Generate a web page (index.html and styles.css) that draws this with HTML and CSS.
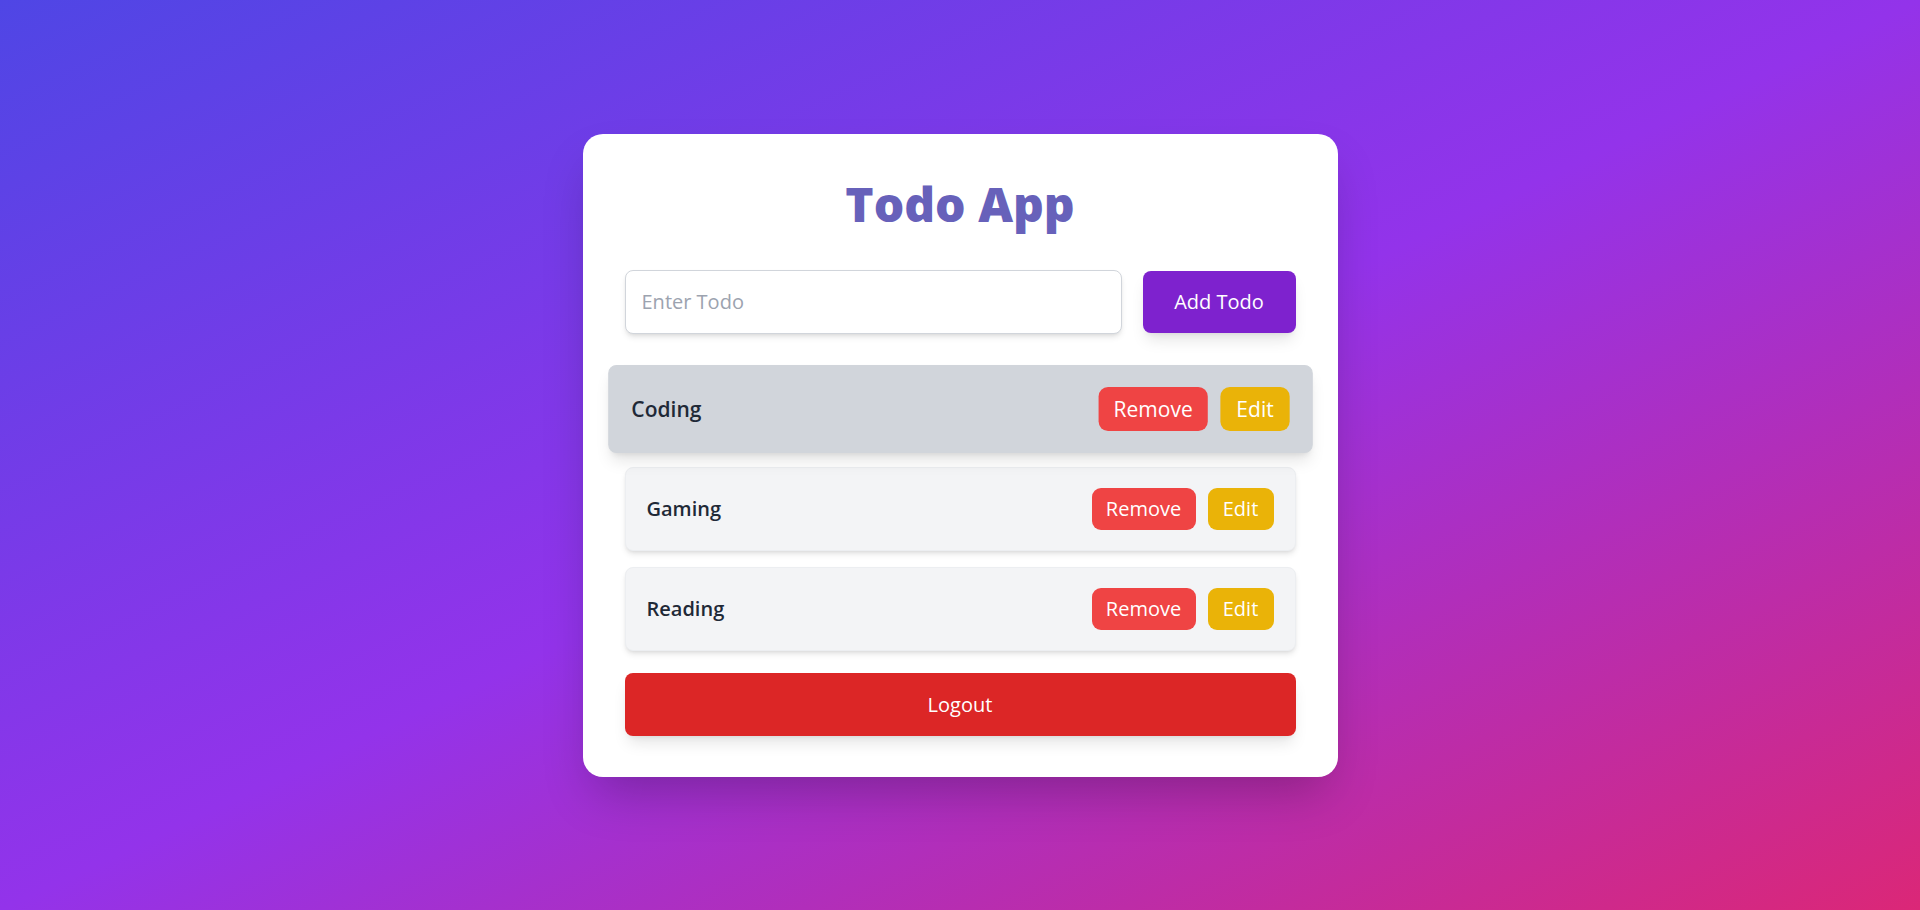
FILE: index.html
```html
<!DOCTYPE html>
<html lang="en">
<head>
<meta charset="utf-8">
<title>Todo App</title>
<link rel="stylesheet" href="styles.css">
</head>
<body>
<main class="page">
  <section class="card">
    <h1 class="title">Todo App</h1>
    <form class="add-form">
      <input class="todo-input" type="text" placeholder="Enter Todo">
      <button class="add-btn" type="button">Add Todo</button>
    </form>
    <ul class="todo-list">
      <li class="todo-item is-hover">
        <span class="todo-text">Coding</span>
        <div class="actions">
          <button class="btn btn-remove" type="button">Remove</button>
          <button class="btn btn-edit" type="button">Edit</button>
        </div>
      </li>
      <li class="todo-item">
        <span class="todo-text">Gaming</span>
        <div class="actions">
          <button class="btn btn-remove" type="button">Remove</button>
          <button class="btn btn-edit" type="button">Edit</button>
        </div>
      </li>
      <li class="todo-item">
        <span class="todo-text">Reading</span>
        <div class="actions">
          <button class="btn btn-remove" type="button">Remove</button>
          <button class="btn btn-edit" type="button">Edit</button>
        </div>
      </li>
    </ul>
    <button class="logout-btn" type="button">Logout</button>
  </section>
</main>
</body>
</html>
```

FILE: styles.css
```css
* { box-sizing: border-box; }
html, body { margin: 0; padding: 0; }
body {
  font-family: "Open Sans", "Noto Sans", "Liberation Sans", sans-serif;
  min-height: 910px;
  background: linear-gradient(to bottom right, #4f46e5 0%, #9333ea 50%, #db2777 100%);
}
.page {
  min-height: 910px;
  display: flex;
  align-items: center;
  justify-content: center;
}
.card {
  width: 755px;
  background: #ffffff;
  border-radius: 20px;
  padding: 46px 42px 41px;
  box-shadow: 0 25px 50px -12px rgba(0, 0, 0, 0.25);
}
.title {
  margin: 0 0 42px;
  text-align: center;
  font-size: 48px;
  line-height: 48px;
  font-weight: 800;
  color: #6761ba;
}
.add-form {
  display: flex;
  gap: 21px;
  height: 64px;
  margin: 0 0 33px;
}
.todo-input {
  flex: 1;
  height: 64px;
  border: 1px solid #d1d5db;
  border-radius: 8px;
  padding: 0 16px;
  font-family: inherit;
  font-size: 20px;
  color: #1f2937;
  outline: none;
  box-shadow: 0 4px 6px -1px rgba(0,0,0,0.1), 0 2px 4px -2px rgba(0,0,0,0.1);
}
.todo-input::placeholder { color: #9ca3af; }
.add-btn {
  width: 153px;
  margin: 1px 0;
  border: none;
  border-radius: 8px;
  background: #7e22ce;
  color: #ffffff;
  font-family: inherit;
  font-size: 20px;
  box-shadow: 0 10px 15px -3px rgba(0,0,0,0.1), 0 4px 6px -4px rgba(0,0,0,0.1);
}
.todo-list {
  list-style: none;
  margin: 0;
  padding: 0;
  display: flex;
  flex-direction: column;
  gap: 16px;
}
.todo-item {
  height: 84px;
  display: flex;
  align-items: center;
  justify-content: space-between;
  padding: 0 21px;
  background: #f3f4f6;
  border: 1px solid #eceef1;
  border-radius: 8px;
  box-shadow: 0 4px 6px -1px rgba(0,0,0,0.1), 0 2px 4px -2px rgba(0,0,0,0.1);
}
.todo-item.is-hover {
  background: #d1d5db;
  border-color: #d1d5db;
  transform: scale(1.05);
  box-shadow: 0 10px 15px -3px rgba(0,0,0,0.1), 0 4px 6px -4px rgba(0,0,0,0.1);
}
.todo-text {
  font-size: 20px;
  font-weight: 600;
  color: #1f2937;
}
.actions {
  display: flex;
  gap: 12px;
}
.btn {
  height: 42px;
  padding: 0 12px;
  border: none;
  border-radius: 9px;
  color: #ffffff;
  font-family: inherit;
  font-size: 20px;
}
.btn-remove { background: #ef4444; width: 104px; }
.btn-edit { background: #eab308; width: 66px; }
.logout-btn {
  display: block;
  width: 100%;
  height: 63px;
  margin-top: 22px;
  border: none;
  border-radius: 8px;
  background: #dc2626;
  color: #ffffff;
  font-family: inherit;
  font-size: 20px;
  box-shadow: 0 10px 15px -3px rgba(0,0,0,0.1), 0 4px 6px -4px rgba(0,0,0,0.1);
}
```
